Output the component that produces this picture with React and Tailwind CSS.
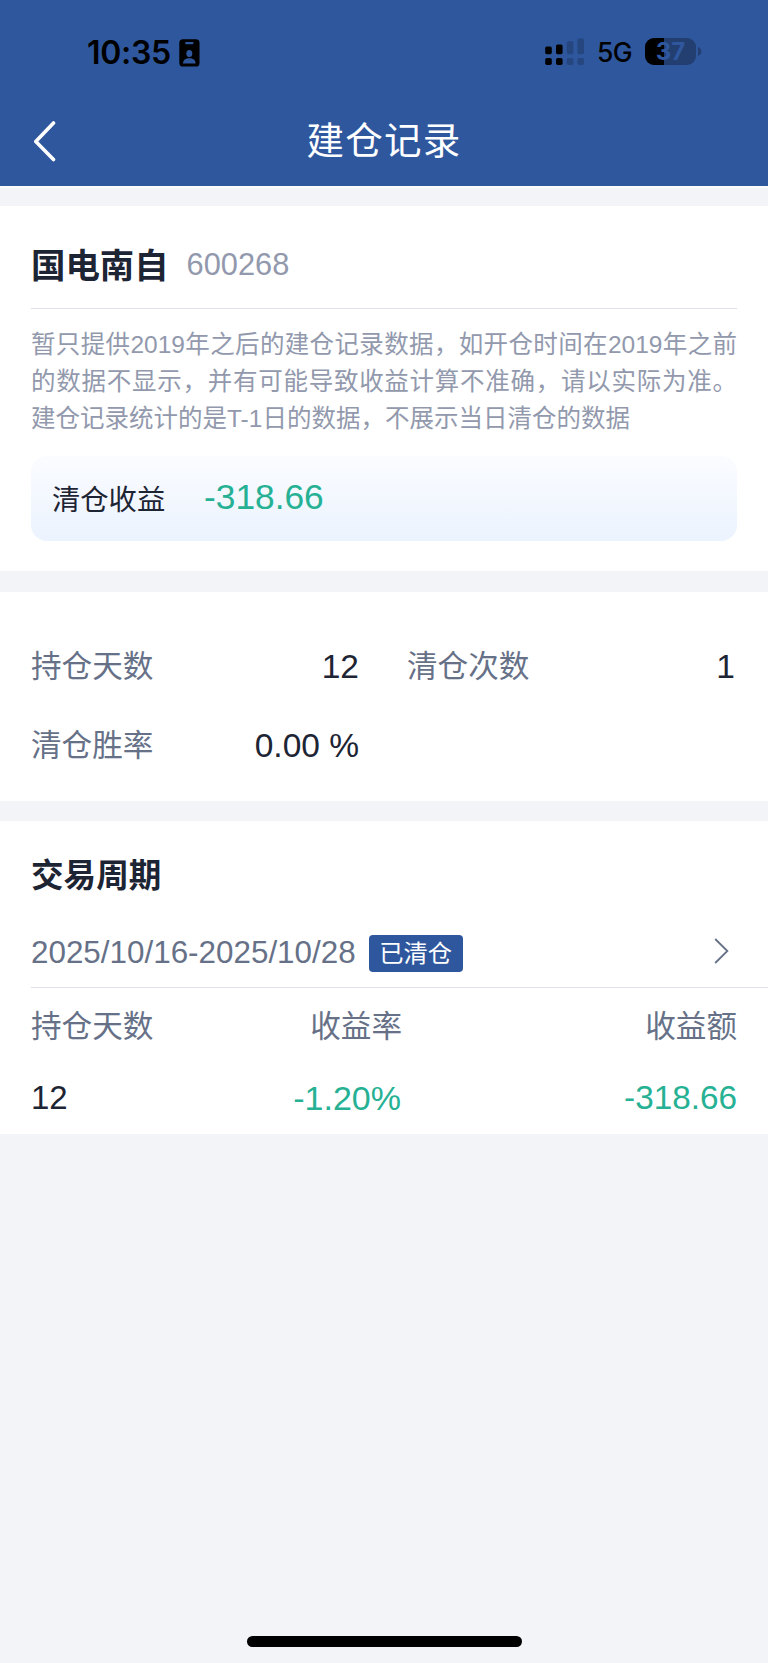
const stats = [
  { label: "持仓天数", value: "12" },
  { label: "清仓次数", value: "1" },
  { label: "清仓胜率", value: "0.00 %" },
];

const periods = [
  {
    range: "2025/10/16-2025/10/28",
    status: "已清仓",
    days: "12",
    rate: "-1.20%",
    profit: "-318.66",
  },
];

const notice =
  "暂只提供2019年之后的建仓记录数据，如开仓时间在2019年之前的数据不显示，并有可能导致收益计算不准确，请以实际为准。" +
  "建仓记录统计的是T-1日的数据，不展示当日清仓的数据";

function IdCardIcon() {
  return (
    <svg width="21" height="28" viewBox="0 0 21 28">
      <rect x="0.3" y="0.3" width="20.2" height="27.2" rx="3.6" fill="#000" />
      <rect x="6" y="3" width="8.6" height="2.2" rx="1.1" fill="#2f579e" />
      <ellipse cx="10.3" cy="14.6" rx="3" ry="3.5" fill="#2f579e" />
      <path
        d="M4 24.4c0-3.4 2.6-5.2 6.3-5.2s6.3 1.8 6.3 5.2z"
        fill="#2f579e"
      />
    </svg>
  );
}

function SignalIcon() {
  return (
    <svg width="40" height="28" viewBox="0 0 40 28">
      <g fill="#000">
        <rect x="0.2" y="8.6" width="6.6" height="7.6" rx="1.6" />
        <rect x="11" y="6.4" width="6.6" height="9.8" rx="1.6" />
        <rect x="0.2" y="20" width="6.6" height="7" rx="1.8" />
        <rect x="11" y="20" width="6.6" height="7" rx="1.8" />
      </g>
      <g fill="#25467f">
        <rect x="21.8" y="3.2" width="6.6" height="13" rx="1.6" />
        <rect x="32.4" y="0.4" width="6.6" height="15.8" rx="1.6" />
        <rect x="21.8" y="20" width="6.6" height="7" rx="1.8" />
        <rect x="32.4" y="20" width="6.6" height="7" rx="1.8" />
      </g>
    </svg>
  );
}

function Battery({ level }) {
  return (
    <div className="flex items-center gap-[2px]">
      <div className="relative w-[51px] h-[27px] rounded-[9px] overflow-hidden bg-[#233e70]">
        <div className="h-full bg-black" style={{ width: `${level}%` }} />
        <span className="absolute inset-0 text-center text-[24px] leading-[28px] font-bold text-[#2f579e]">
          {level}
        </span>
      </div>
      <svg width="4" height="9" viewBox="0 0 4 9">
        <path d="M0 0c2 .8 3.4 2.4 3.4 4.500S2 8.2 0 9z" fill="#233e70" />
      </svg>
    </div>
  );
}

function StatusBar() {
  return (
    <div className="h-[94px] pt-[32px] pl-[87px] pr-[66px] flex items-start justify-between font-['Inter',sans-serif] text-black">
      <div className="h-[41px] flex items-center gap-[8px]">
        <span className="pt-[1px] text-[32px] font-semibold tracking-[-0.3px]">
          10:35
        </span>
        <IdCardIcon />
      </div>
      <div className="h-[39px] flex items-center">
        <SignalIcon />
        <span className="ml-[12px] w-[48px] pt-[3px] text-[26.5px] font-medium tracking-[-0.6px]">
          5G
        </span>
        <Battery level={37} />
      </div>
    </div>
  );
}

function Header() {
  return (
    <header className="h-[186px] bg-[#2f579e]">
      <StatusBar />
      <div className="h-[92px] pt-[1px] px-[33px] grid grid-cols-[1fr_auto_1fr] items-center">
        <button type="button" className="w-[24px]">
          <svg width="24" height="42" viewBox="0 0 24 42" fill="none">
            <path
              d="M20.5 3 2.8 21.5 20.5 39.5"
              stroke="#fff"
              strokeWidth="3.6"
              strokeLinecap="round"
              strokeLinejoin="round"
            />
          </svg>
        </button>
        <h1 className="text-[37.5px] leading-[56px] tracking-[1.3px] text-white">
          建仓记录
        </h1>
      </div>
    </header>
  );
}

function Summary() {
  return (
    <section className="h-[365px] px-[31px] bg-white">
      <div className="h-[103px] pt-[17px] flex items-center gap-[18px] border-b border-[#e1e3ea]">
        <h2 className="text-[34.4px] leading-[50px] font-bold text-[#1d2433]">
          国电南自
        </h2>
        <span className="text-[30.8px] text-[#9299ad]">600268</span>
      </div>
      <p className="mt-[18px] text-[24.5px] leading-[36.8px] text-justify text-[#9299ad]">
        {notice}
      </p>
      <div className="mt-[19px] h-[85px] px-[21px] flex items-center rounded-[16px] bg-linear-to-b from-[#fbfcff] to-[#ebf3fe]">
        <span className="w-[152px] pt-[2px] text-[28.3px] text-[#1d2433]">
          清仓收益
        </span>
        <span className="pb-[2px] text-[35.3px] text-[#26b194]">-318.66</span>
      </div>
    </section>
  );
}

function Stats() {
  return (
    <section className="mt-[21px] h-[209px] px-[31px] pt-[36px] grid grid-cols-2 auto-rows-[78.5px] gap-x-[46px] bg-white">
      {stats.map((item) => (
        <div
          key={item.label}
          className="pr-[2px] flex items-center justify-between"
        >
          <span className="text-[30.6px] text-[#667188]">{item.label}</span>
          <span className="text-[33.5px] text-[#1d2433]">{item.value}</span>
        </div>
      ))}
    </section>
  );
}

function Period({ period }) {
  return (
    <div>
      <div className="ml-[31px] h-[70px] pr-[39px] flex items-center border-b border-[#dfe2e9]">
        <span className="text-[31.4px] text-[#667188]">{period.range}</span>
        <span className="ml-[13px] mt-[1px] w-[94px] h-[37px] rounded-[4px] bg-[#2f579e] text-center text-[24.3px] leading-[37px] text-white">
          {period.status}
        </span>
        <svg
          className="ml-auto mb-[4px]"
          width="15"
          height="26"
          viewBox="0 0 15 26"
          fill="none"
        >
          <path
            d="M1.2 1 13.4 13 1.2 25"
            stroke="#667188"
            strokeWidth="1.8"
          />
        </svg>
      </div>
      <div className="px-[31px] grid grid-cols-[130px_241px_1fr] text-right">
        <span className="pt-[15px] text-left text-[30.6px] leading-[46px] text-[#667188]">
          持仓天数
        </span>
        <span className="pt-[15px] text-[30.6px] leading-[46px] text-[#667188]">
          收益率
        </span>
        <span className="pt-[15px] text-[30.6px] leading-[46px] text-[#667188]">
          收益额
        </span>
        <span className="pt-[26px] text-left text-[33px] leading-[46px] text-[#1d2433]">
          {period.days}
        </span>
        <span className="pt-[26px] pr-[1px] text-[34px] leading-[46px] text-[#26b194]">
          {period.rate}
        </span>
        <span className="pt-[26px] text-[33.3px] leading-[46px] text-[#26b194]">
          {period.profit}
        </span>
      </div>
    </div>
  );
}

export default function App() {
  return (
    <div className="w-[768px] h-[1663px] flex flex-col overflow-hidden bg-[#f3f4f7] font-['Liberation_Sans','Noto_Sans_CJK_SC',sans-serif]">
      <Header />
      <div className="h-[20px] border-t-2 border-[#fbfbfc]" />
      <Summary />
      <Stats />
      <section className="mt-[20px] h-[313px] bg-white">
        <h2 className="h-[97px] pt-[30px] pl-[31px] text-[32.6px] leading-[50px] font-bold text-[#1d2433]">
          交易周期
        </h2>
        {periods.map((period) => (
          <Period key={period.range} period={period} />
        ))}
      </section>
      <div className="mt-auto mb-[16px] mx-auto w-[275px] h-[11px] rounded-full bg-black" />
    </div>
  );
}
